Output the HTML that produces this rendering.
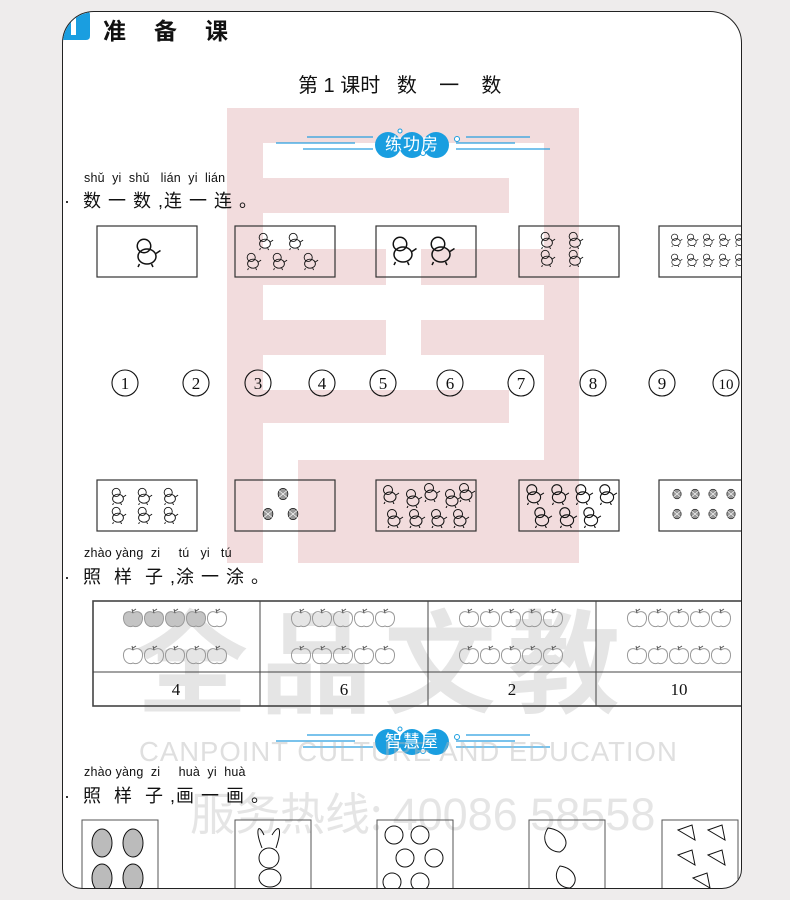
<!DOCTYPE html>
<html><head><meta charset="utf-8">
<style>
*{margin:0;padding:0;box-sizing:border-box}
body{width:790px;height:900px;background:#eeecec;position:relative;overflow:hidden;font-family:"Liberation Sans","Noto Sans CJK SC",sans-serif}
#frame{position:absolute;left:62px;top:11px;width:680px;height:878px;border:1.5px solid #222;border-radius:32px 32px 20px 20px;background:#fff;overflow:hidden}
#in{position:absolute;left:-63px;top:-12px;width:790px;height:900px}
.a{position:absolute;white-space:nowrap}
.py{font-size:12.5px;color:#111;letter-spacing:0.2px}
.q{font-size:18px;color:#111;letter-spacing:1px}
.wm{color:rgba(175,175,175,0.32);font-family:"Noto Sans CJK SC",sans-serif}
.bn{width:72px;text-align:center;font-size:17px;color:#fff;line-height:24px;letter-spacing:1px}
</style></head><body>
<div id="frame"><div id="in">
<svg class="a" style="left:0;top:0" width="790" height="900" viewBox="0 0 790 900">
<defs>
<symbol id="apple" viewBox="0 0 22 22"><path d="M11 6 C7 3 1 5 1.5 12 C2 18 7 21 11 19 C15 21 20 18 20.5 12 C21 5 15 3 11 6Z" fill="none" stroke="#999" stroke-width="1"/><path d="M11 6 L10 2 M11 4 L14 2" stroke="#555" stroke-width="1" fill="none"/></symbol>
<symbol id="appleg" viewBox="0 0 22 22"><path d="M11 6 C7 3 1 5 1.5 12 C2 18 7 21 11 19 C15 21 20 18 20.5 12 C21 5 15 3 11 6Z" fill="#c4c4c4" stroke="#999" stroke-width="1"/><path d="M11 6 L10 2 M11 4 L14 2" stroke="#555" stroke-width="1" fill="none"/></symbol>
<symbol id="cr" viewBox="0 0 20 20"><circle cx="8" cy="6" r="4.5" fill="none" stroke="#111" stroke-width="1"/><ellipse cx="10" cy="13" rx="6" ry="5" fill="none" stroke="#111" stroke-width="1"/><path d="M5 18 L4 20 M13 18 L14 20 M16 11 L19 9" stroke="#111" stroke-width="1"/></symbol>
<symbol id="crd" viewBox="0 0 20 20"><ellipse cx="10" cy="10" rx="7" ry="8" fill="#999" stroke="#111" stroke-width="1"/><path d="M4 5 L16 15 M16 5 L4 15" stroke="#fff" stroke-width="1"/></symbol>
</defs>
<g fill="#f2dcdd">
<rect x="227" y="108" width="352" height="35"/>
<rect x="227" y="108" width="36" height="455"/>
<rect x="544" y="108" width="35" height="455"/>
<rect x="263" y="178" width="246" height="35"/>
<rect x="263" y="249" width="123" height="36"/><rect x="421" y="249" width="123" height="36"/>
<rect x="263" y="320" width="123" height="35"/><rect x="421" y="320" width="123" height="35"/>
<rect x="263" y="390" width="246" height="33"/>
<rect x="298" y="460" width="246" height="103"/>
</g>
<path d="M63 40 L63 30 Q63 12 82 11 L86 11 Q90 11 90 15 L90 36 Q90 40 86 40Z" fill="#1a9ee0"/>
<rect x="71" y="17" width="5" height="18" fill="#fff"/>
<g stroke="#2a9fe0" stroke-width="1.3">
<line x1="307" y1="137" x2="373" y2="137"/><line x1="276" y1="143" x2="355" y2="143"/><line x1="303" y1="149" x2="373" y2="149"/>
<line x1="466" y1="137" x2="530" y2="137"/><line x1="456" y1="143" x2="515" y2="143"/><line x1="456" y1="149" x2="550" y2="149"/>
<line x1="307" y1="735" x2="373" y2="735"/><line x1="276" y1="741" x2="355" y2="741"/><line x1="303" y1="747" x2="373" y2="747"/>
<line x1="466" y1="735" x2="530" y2="735"/><line x1="456" y1="741" x2="515" y2="741"/><line x1="456" y1="747" x2="550" y2="747"/>
</g>
<g fill="#1a9ee0"><circle cx="388" cy="145" r="13"/><circle cx="412" cy="145" r="13"/><circle cx="436" cy="145" r="13"/>
<circle cx="388" cy="742" r="13"/><circle cx="412" cy="742" r="13"/><circle cx="436" cy="742" r="13"/></g>
<g fill="#fff" stroke="#1a9ee0" stroke-width="1"><circle cx="457" cy="139" r="2.5"/><circle cx="423" cy="153" r="2.5"/><circle cx="400" cy="131" r="2"/>
<circle cx="457" cy="737" r="2.5"/><circle cx="423" cy="751" r="2.5"/><circle cx="400" cy="729" r="2"/></g>
<g fill="none" stroke="#333" stroke-width="1.2">
<rect x="97" y="226" width="100" height="51"/><rect x="235" y="226" width="100" height="51"/><rect x="376" y="226" width="100" height="51"/><rect x="519" y="226" width="100" height="51"/><rect x="659" y="226" width="100" height="51"/>
<rect x="97" y="480" width="100" height="51"/><rect x="235" y="480" width="100" height="51"/><rect x="376" y="480" width="100" height="51"/><rect x="519" y="480" width="100" height="51"/><rect x="659" y="480" width="100" height="51"/>
</g>
<use href="#cr" x="132" y="234" width="30" height="36"/>
<use href="#cr" x="256" y="231" width="18" height="20"/><use href="#cr" x="286" y="231" width="18" height="20"/>
<use href="#cr" x="244" y="251" width="18" height="20"/><use href="#cr" x="270" y="251" width="18" height="20"/><use href="#cr" x="301" y="251" width="18" height="20"/>
<use href="#cr" x="388" y="234" width="30" height="32"/><use href="#cr" x="426" y="234" width="30" height="32"/>
<use href="#cr" x="535" y="231" width="24" height="18"/><use href="#cr" x="563" y="231" width="24" height="18"/><use href="#cr" x="535" y="249" width="24" height="18"/><use href="#cr" x="563" y="249" width="24" height="18"/>
<g><use href="#cr" x="669" y="233" width="14" height="14"/><use href="#cr" x="685" y="233" width="14" height="14"/><use href="#cr" x="701" y="233" width="14" height="14"/><use href="#cr" x="717" y="233" width="14" height="14"/><use href="#cr" x="733" y="233" width="14" height="14"/>
<use href="#cr" x="669" y="253" width="14" height="14"/><use href="#cr" x="685" y="253" width="14" height="14"/><use href="#cr" x="701" y="253" width="14" height="14"/><use href="#cr" x="717" y="253" width="14" height="14"/><use href="#cr" x="733" y="253" width="14" height="14"/></g>
<use href="#cr" x="107" y="487" width="22" height="18"/><use href="#cr" x="133" y="487" width="22" height="18"/><use href="#cr" x="159" y="487" width="22" height="18"/>
<use href="#cr" x="107" y="506" width="22" height="18"/><use href="#cr" x="133" y="506" width="22" height="18"/><use href="#cr" x="159" y="506" width="22" height="18"/>
<use href="#crd" x="276" y="486" width="14" height="16"/><use href="#crd" x="261" y="506" width="14" height="16"/><use href="#crd" x="286" y="506" width="14" height="16"/>
<use href="#cr" x="380" y="484" width="20" height="20"/><use href="#cr" x="403" y="488" width="20" height="20"/><use href="#cr" x="421" y="482" width="20" height="20"/><use href="#cr" x="442" y="488" width="20" height="20"/><use href="#cr" x="456" y="482" width="20" height="20"/>
<use href="#cr" x="384" y="508" width="20" height="20"/><use href="#cr" x="406" y="508" width="20" height="20"/><use href="#cr" x="428" y="508" width="20" height="20"/><use href="#cr" x="450" y="508" width="20" height="20"/>
<use href="#cr" x="523" y="483" width="22" height="22"/><use href="#cr" x="548" y="483" width="22" height="22"/><use href="#cr" x="572" y="483" width="22" height="22"/><use href="#cr" x="596" y="483" width="22" height="22"/>
<use href="#cr" x="531" y="506" width="22" height="22"/><use href="#cr" x="556" y="506" width="22" height="22"/><use href="#cr" x="580" y="506" width="22" height="22"/>
<g><use href="#crd" x="670" y="488" width="14" height="12"/><use href="#crd" x="688" y="488" width="14" height="12"/><use href="#crd" x="706" y="488" width="14" height="12"/><use href="#crd" x="724" y="488" width="14" height="12"/>
<use href="#crd" x="670" y="508" width="14" height="12"/><use href="#crd" x="688" y="508" width="14" height="12"/><use href="#crd" x="706" y="508" width="14" height="12"/><use href="#crd" x="724" y="508" width="14" height="12"/></g>
<g fill="none" stroke="#111" stroke-width="1.1">
<circle cx="125" cy="383" r="13"/><circle cx="196" cy="383" r="13"/><circle cx="258" cy="383" r="13"/><circle cx="322" cy="383" r="13"/><circle cx="383" cy="383" r="13"/><circle cx="450" cy="383" r="13"/><circle cx="521" cy="383" r="13"/><circle cx="593" cy="383" r="13"/><circle cx="662" cy="383" r="13"/><circle cx="726" cy="383" r="13"/>
</g>
<g font-family="Liberation Serif" font-size="17" text-anchor="middle" fill="#111">
<text x="125" y="389">1</text><text x="196" y="389">2</text><text x="258" y="389">3</text><text x="322" y="389">4</text><text x="383" y="389">5</text><text x="450" y="389">6</text><text x="521" y="389">7</text><text x="593" y="389">8</text><text x="662" y="389">9</text><text x="726" y="389" font-size="15">10</text>
</g>
</svg>
<div class="a wm" style="left:136px;top:600px;font-size:112px;font-weight:bold;letter-spacing:12px;line-height:1">全品文教</div>
<div class="a wm" style="left:139px;top:738px;font-size:27.5px;letter-spacing:1px;font-family:'Liberation Sans',sans-serif;line-height:1;color:rgba(185,185,185,0.45)">CANPOINT CULTURE AND EDUCATION</div>
<div class="a wm" style="left:190px;top:788px;font-size:45px;line-height:1">服务热线: <span style="font-family:'Liberation Sans',sans-serif">40086 58558</span></div>
<svg class="a" style="left:0;top:0" width="790" height="900" viewBox="0 0 790 900">
<g fill="none" stroke="#444" stroke-width="1.6">
<rect x="93" y="601" width="660" height="105"/>
<line x1="93" y1="672" x2="753" y2="672" stroke-width="1"/>
<line x1="260" y1="601" x2="260" y2="706" stroke-width="1"/><line x1="428" y1="601" x2="428" y2="706" stroke-width="1"/><line x1="596" y1="601" x2="596" y2="706" stroke-width="1"/>
</g>
<g>
<use href="#appleg" x="122" y="607" width="22" height="22"/><use href="#appleg" x="143" y="607" width="22" height="22"/><use href="#appleg" x="164" y="607" width="22" height="22"/><use href="#appleg" x="185" y="607" width="22" height="22"/><use href="#apple" x="206" y="607" width="22" height="22"/>
<use href="#apple" x="122" y="644" width="22" height="22"/><use href="#apple" x="143" y="644" width="22" height="22"/><use href="#apple" x="164" y="644" width="22" height="22"/><use href="#apple" x="185" y="644" width="22" height="22"/><use href="#apple" x="206" y="644" width="22" height="22"/>
</g>
<g id="ap2">
<use href="#apple" x="290" y="607" width="22" height="22"/><use href="#apple" x="311" y="607" width="22" height="22"/><use href="#apple" x="332" y="607" width="22" height="22"/><use href="#apple" x="353" y="607" width="22" height="22"/><use href="#apple" x="374" y="607" width="22" height="22"/>
<use href="#apple" x="290" y="644" width="22" height="22"/><use href="#apple" x="311" y="644" width="22" height="22"/><use href="#apple" x="332" y="644" width="22" height="22"/><use href="#apple" x="353" y="644" width="22" height="22"/><use href="#apple" x="374" y="644" width="22" height="22"/>
</g>
<use href="#ap2" x="168" y="0"/><use href="#ap2" x="336" y="0"/>
<g font-family="Liberation Serif" font-size="17" text-anchor="middle" fill="#111">
<text x="176" y="695">4</text><text x="344" y="695">6</text><text x="512" y="695">2</text><text x="679" y="695">10</text>
</g>
<g fill="none" stroke="#555" stroke-width="1">
<rect x="82" y="820" width="76" height="80"/><rect x="235" y="820" width="76" height="80"/><rect x="377" y="820" width="76" height="80"/><rect x="529" y="820" width="76" height="80"/><rect x="662" y="820" width="76" height="80"/>
</g>
<g fill="#bbb" stroke="#111" stroke-width="1">
<ellipse cx="102" cy="843" rx="10" ry="14"/><ellipse cx="133" cy="843" rx="10" ry="14"/><ellipse cx="102" cy="878" rx="10" ry="14"/><ellipse cx="133" cy="878" rx="10" ry="14"/>
</g>
<g fill="none" stroke="#111" stroke-width="1">
<path d="M262 848 C255 830 258 822 264 835 M276 848 C282 830 280 822 272 835"/><circle cx="269" cy="858" r="10"/><ellipse cx="270" cy="878" rx="11" ry="9"/>
<circle cx="394" cy="835" r="9"/><circle cx="420" cy="835" r="9"/><circle cx="405" cy="858" r="9"/><circle cx="434" cy="858" r="9"/><circle cx="392" cy="882" r="9"/><circle cx="420" cy="882" r="9"/>
<path d="M548 828 C565 830 572 845 560 852 C548 852 540 840 548 828Z M560 866 C575 868 580 882 570 888 C558 888 552 876 560 866Z"/>
<path d="M678 830 L692 825 L695 840 Z M708 830 L722 825 L725 840 Z M678 855 L692 850 L695 865 Z M708 855 L722 850 L725 865 Z M693 878 L707 873 L710 888 Z"/>
</g>
</svg>
<div class="a" style="left:103px;top:14px;font-size:23px;font-weight:bold;letter-spacing:28px;color:#111;font-family:'Noto Sans CJK SC',sans-serif;line-height:30px">准备课</div>
<div class="a" style="left:298px;top:73px;font-size:20px;color:#111;line-height:26px">第 1 课时 &nbsp; 数 &nbsp;&nbsp; 一 &nbsp;&nbsp; 数</div>
<div class="a bn" style="left:376px;top:133px">练功房</div>
<div class="a bn" style="left:376px;top:730px">智慧屋</div>
<div class="a py" style="left:84px;top:171px">shǔ &nbsp;yi &nbsp;shǔ &nbsp; lián &nbsp;yi &nbsp;lián</div>
<div class="a q" style="left:64px;top:189px;line-height:24px">·&nbsp; 数 一 数 ,连 一 连 。</div>
<div class="a py" style="left:84px;top:546px">zhào yàng &nbsp;zi &nbsp; &nbsp; tú &nbsp; yi &nbsp; tú</div>
<div class="a q" style="left:64px;top:565px;line-height:24px">·&nbsp; 照 &nbsp;样 &nbsp;子 ,涂 一 涂 。</div>
<div class="a py" style="left:84px;top:765px">zhào yàng &nbsp;zi &nbsp; &nbsp; huà &nbsp;yi &nbsp;huà</div>
<div class="a q" style="left:64px;top:784px;line-height:24px">·&nbsp; 照 &nbsp;样 &nbsp;子 ,画 一 画 。</div>
</div></div>
</body></html>
